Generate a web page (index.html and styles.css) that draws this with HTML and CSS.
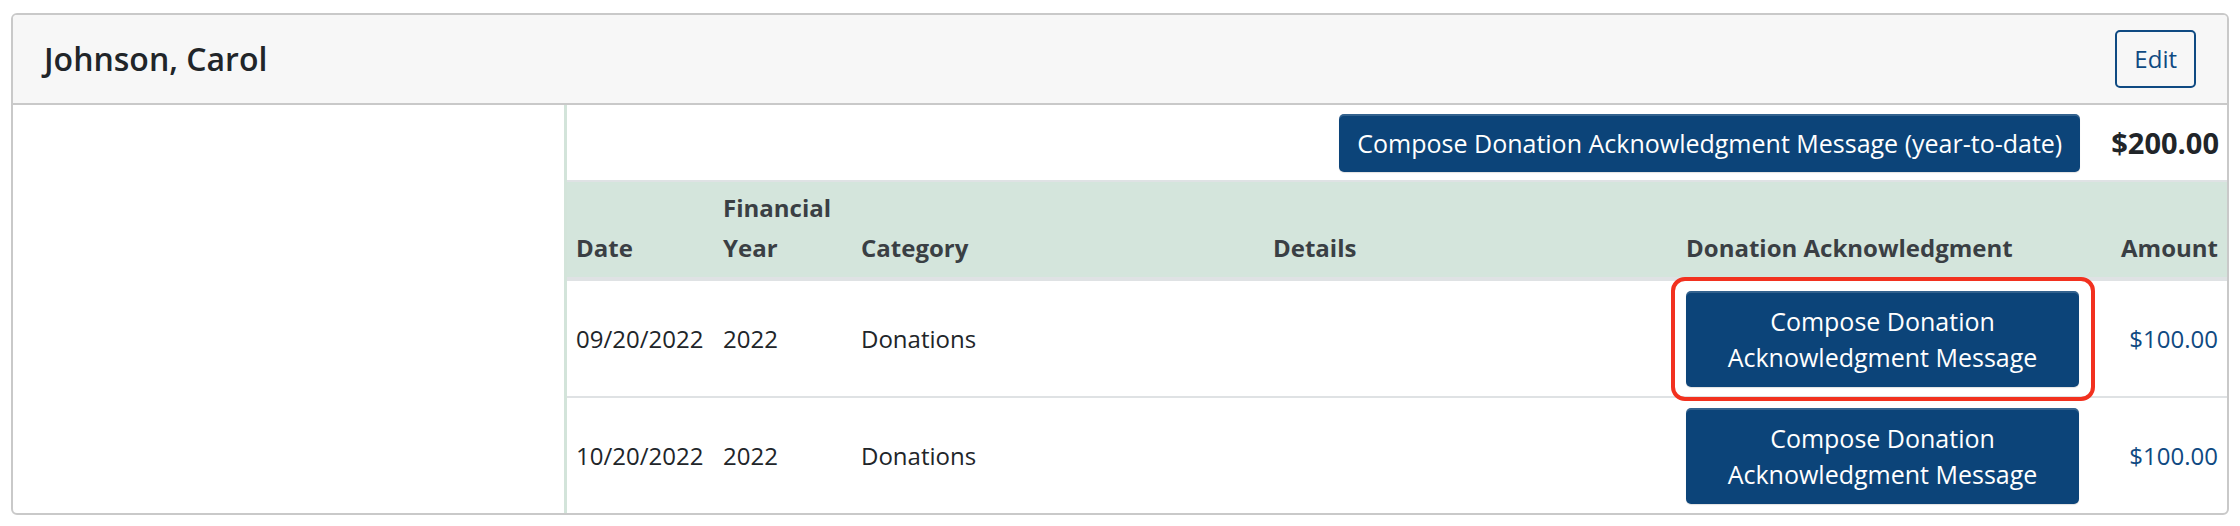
FILE: index.html
```html
<!DOCTYPE html>
<html lang="en">
<head>
<meta charset="utf-8">
<title>Johnson, Carol</title>
<link rel="stylesheet" href="styles.css">
</head>
<body>
<div class="card">
  <div class="card-header">
    <h5 class="card-title">Johnson, Carol</h5>
    <button class="btn btn-outline">Edit</button>
  </div>
  <div class="card-body">
    <div class="side"></div>
    <div class="main">
      <div class="totals">
        <button class="btn btn-primary">Compose Donation Acknowledgment Message (year-to-date)</button>
        <span class="total">$200.00</span>
      </div>
      <table class="donations">
        <colgroup>
          <col class="c-date">
          <col class="c-fy">
          <col class="c-cat">
          <col class="c-det">
          <col class="c-ack">
          <col class="c-amt">
        </colgroup>
        <thead>
          <tr>
            <th>Date</th>
            <th>Financial Year</th>
            <th>Category</th>
            <th>Details</th>
            <th>Donation Acknowledgment</th>
            <th class="num">Amount</th>
          </tr>
        </thead>
        <tbody>
          <tr>
            <td>09/20/2022</td>
            <td>2022</td>
            <td>Donations</td>
            <td></td>
            <td><div class="highlight"><button class="btn btn-primary btn-block">Compose Donation Acknowledgment Message</button></div></td>
            <td class="num"><a class="amount" href="#">$100.00</a></td>
          </tr>
          <tr>
            <td>10/20/2022</td>
            <td>2022</td>
            <td>Donations</td>
            <td></td>
            <td><button class="btn btn-primary btn-block">Compose Donation Acknowledgment Message</button></td>
            <td class="num"><a class="amount" href="#">$100.00</a></td>
          </tr>
        </tbody>
      </table>
    </div>
  </div>
</div>
</body>
</html>
```
FILE: styles.css
```css
* { box-sizing: border-box; }

body {
  margin: 0;
  padding: 13px 11px;
  background: #ffffff;
  font-family: "Open Sans", "Noto Sans", sans-serif;
  font-size: 24px;
  line-height: 36px;
  color: #212529;
}

.card {
  width: 2218px;
  border: 2px solid #c9c9c9;
  border-radius: 6px;
  overflow: hidden;
  background: #fff;
}

.card-header {
  display: flex;
  align-items: center;
  justify-content: space-between;
  padding: 15px 31px 15px 31px;
  background: #f7f7f7;
  border-bottom: 2px solid #c9c9c9;
}

.card-title {
  margin: 0;
  font-size: 32px;
  line-height: 40px;
  font-weight: 600;
  color: #212529;
}

.btn {
  font-family: inherit;
  font-size: 24px;
  line-height: 36px;
  border-radius: 5px;
  cursor: pointer;
  text-align: center;
}

.btn-outline {
  padding: 9px 17px;
  background: transparent;
  color: #0f4a82;
  border: 2px solid #0f4a82;
}

.btn-primary {
  padding: 11px 18px;
  background: #0c4479;
  color: #ffffff;
  border: none;
  font-size: 25px;
  box-shadow: inset 0 2px 0 rgba(255, 255, 255, 0.16), 0 1px 1px rgba(0, 0, 0, 0.12);
}

.btn-block {
  display: block;
  width: 100%;
  padding: 12px 18px;
}

.card-body {
  display: grid;
  grid-template-columns: 551px 1fr;
}

.main {
  border-left: 3px solid #d3e4da;
}

.totals {
  display: flex;
  align-items: center;
  justify-content: flex-end;
  gap: 31px;
  padding: 9px 8px 8px 9px;
}

.total {
  font-size: 29px;
  font-weight: 700;
  color: #212529;
}

.donations {
  width: 100%;
  table-layout: fixed;
  border-collapse: collapse;
}

.c-date { width: 147px; }
.c-fy { width: 138px; }
.c-cat { width: 412px; }
.c-det { width: 413px; }
.c-ack { width: 411px; }
.c-amt { width: 139px; }

.donations th {
  padding: 6px 9px 9px;
  background: #d4e5dc;
  color: #3a3f44;
  font-weight: 700;
  line-height: 40px;
  text-align: left;
  vertical-align: bottom;
  border-top: 2px solid #dfe2e4;
  border-bottom: 4px solid #dfe2e4;
}

.donations td {
  padding: 10px 9px 9px;
  vertical-align: middle;
  border-top: 2px solid #dfe2e4;
}

.donations tbody tr:first-child td {
  border-top: none;
}

.donations .num {
  text-align: right;
}

.amount {
  color: #0f4a82;
  text-decoration: none;
}

.highlight {
  position: relative;
}

.highlight::after {
  content: "";
  position: absolute;
  top: -14px;
  bottom: -14px;
  left: -15px;
  right: -16px;
  border: 4px solid #f2311f;
  border-radius: 14px;
  pointer-events: none;
}
```
